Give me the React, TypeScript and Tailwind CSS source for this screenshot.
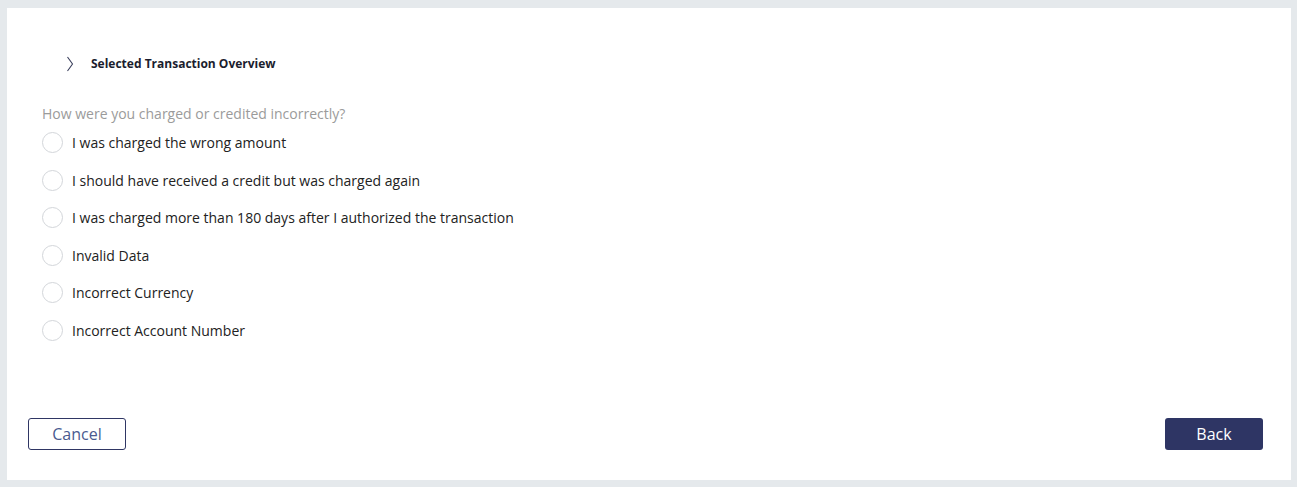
const options = [
  "I was charged the wrong amount",
  "I should have received a credit but was charged again",
  "I was charged more than 180 days after I authorized the transaction",
  "Invalid Data",
  "Incorrect Currency",
  "Incorrect Account Number",
];

export default function App() {
  return (
    <div
      className="w-[1297px] h-[487px] bg-[#e5e9ec] pt-[8px] pl-[7px] pr-[6px] pb-[7px]"
      style={{ fontFamily: '"Open Sans", sans-serif' }}
    >
      <div className="h-full bg-white flex flex-col">
        {/* Overview toggle */}
        <div className="flex items-center pl-[59px] pt-[48px] h-[64px]">
          <svg width="8" height="16" viewBox="0 0 8 16" className="text-[#3a3f5c]">
            <path d="M1.5 1 L6.5 8 L1.5 15" fill="none" stroke="currentColor" strokeWidth="1.1" />
          </svg>
          <span className="ml-[17px] text-[12px] font-bold text-[#1b1d2e] leading-none">
            Selected Transaction Overview
          </span>
        </div>

        {/* Question */}
        <div className="pl-[35px] pt-[32px]">
          <div className="text-[14px] leading-[20px] text-[#9b9b9b]">
            How were you charged or credited incorrectly?
          </div>
          <div className="flex flex-col">
            {options.map((o) => (
              <label key={o} className="flex items-center h-[37.5px]">
                <span className="w-[21px] h-[21px] rounded-full border border-[#d3d6da] bg-white" />
                <span className="ml-[9px] text-[14px] text-[#222]">{o}</span>
              </label>
            ))}
          </div>
        </div>

        {/* Actions */}
        <div className="mt-auto flex justify-between px-[21px] pr-[28px] pb-[30px]">
          <button className="w-[98px] h-[32px] rounded-[3px] border border-[#2f3664] text-[16px] text-[#4a5a8f] bg-white">
            Cancel
          </button>
          <button className="w-[98px] h-[32px] rounded-[3px] bg-[#2e3564] text-[16px] text-white">
            Back
          </button>
        </div>
      </div>
    </div>
  );
}
